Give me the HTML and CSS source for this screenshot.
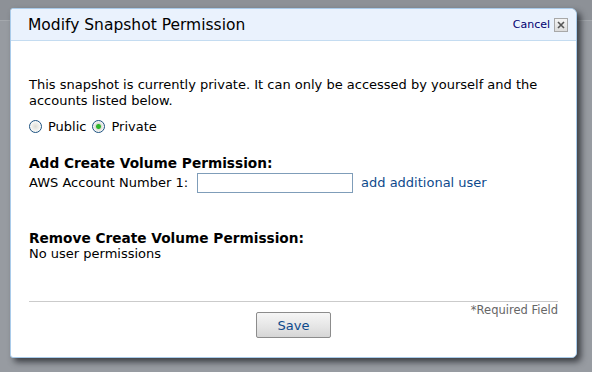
FILE: index.html
```html
<!DOCTYPE html>
<html lang="en">
<head>
  <link rel="stylesheet" href="styles.css">
</head>
<body>

<div class="backdrop-line"></div>

<div id="dialog" class="dialog">
  <div class="dialogHead">
    <span class="dialogTitle">Modify Snapshot Permission</span>
    <a class="cancel" href="#">Cancel</a>
    <span class="closeBox">
      <svg width="8" height="8" viewBox="0 0 8 8"><path d="M1 1L7 7M7 1L1 7" stroke="#555" stroke-width="1.6"/></svg>
    </span>
  </div>

  <div class="dialogBody">
    <p class="intro">This snapshot is currently private. It can only be accessed by yourself and the accounts listed below.</p>

    <div class="radios">
      <span class="radio"></span><span class="radioLabel">Public</span>
      <span class="radio checked"></span><span class="radioLabel">Private</span>
    </div>

    <h3 class="section">Add Create Volume Permission:</h3>
    <div class="accountRow">
      <span>AWS Account Number 1:</span>
      <span class="field"></span>
      <a class="addLink" href="#">add additional user</a>
    </div>

    <h3 class="section remove">Remove Create Volume Permission:</h3>
    <div class="none">No user permissions</div>

    <div class="footer">
      <div class="required">*Required Field</div>
      <div class="saveWrap"><span class="save">Save</span></div>
    </div>
  </div>
</div>

</body>
</html>
```
FILE: styles.css
```css
body {
  margin: 0;
  height: 372px;
  overflow: hidden;
  background: #979ba1;
  font-family: "DejaVu Sans", Verdana, sans-serif;
  font-size: 13px;
  color: #000;
}

.backdrop-line {
  height: 20px;
  background: #8d9197;
  border-bottom: 1px solid #a4a8ad;
}

.dialog {
  position: absolute;
  top: 8px;
  left: 10px;
  width: 565px;
  height: 348px;
  background: #fff;
  border: 1px solid #a9cbea;
  border-radius: 3px 6px 5px 3px;
  box-shadow: 4px 4px 6px rgba(30, 32, 38, 0.75);
}

.dialogHead {
  display: flex;
  align-items: center;
  height: 31px;
  padding: 0 8px 0 17px;
  background: #eaf2fd;
  border-bottom: 1px solid #c4dcf1;
  border-radius: 3px 6px 0 0;
}

.dialogTitle {
  flex: 1;
  font-size: 15.5px;
  padding-top: 1px;
}

.cancel {
  font-size: 11px;
  color: #000070;
  text-decoration: none;
  margin-right: 4px;
}

.closeBox {
  display: flex;
  align-items: center;
  justify-content: center;
  width: 12px;
  height: 12px;
  background: linear-gradient(#f4f4f4, #dcdcdc);
  border: 1px solid #a8a8a8;
}

.dialogBody {
  padding: 0 18px 0 18px;
}

.intro {
  margin: 36px 0 0 0;
  line-height: 16px;
}

.radios {
  display: flex;
  align-items: center;
  margin-top: 9px;
  height: 16px;
}

.radio {
  box-sizing: border-box;
  width: 13px;
  height: 13px;
  border: 1px solid #1c5180;
  border-radius: 50%;
  background: radial-gradient(#dcdcd6, #fbfbf9 70%);
  margin-right: 6px;
}

.radio.checked {
  background: radial-gradient(#2fb62b 0 2px, #dcdcd6 3px, #fbfbf9 70%);
}

.radioLabel {
  margin-right: 6px;
}

.section {
  margin: 21px 0 0 0;
  font-size: 13.7px;
  font-weight: bold;
  line-height: 16px;
}

.accountRow {
  display: flex;
  align-items: center;
  height: 21px;
  margin-top: 1px;
}

.field {
  box-sizing: border-box;
  width: 156px;
  height: 20px;
  border: 1px solid #7f9db9;
  margin-left: 9px;
  margin-right: 8px;
}

.addLink {
  color: #0e4a8c;
  text-decoration: none;
}

.section.remove {
  margin-top: 37px;
}

.none {
  line-height: 16px;
}

.footer {
  margin-top: 39px;
  border-top: 1px solid #cbcbcb;
}

.required {
  text-align: right;
  font-size: 11.5px;
  color: #666;
  margin-top: 1px;
  line-height: 14px;
}

.saveWrap {
  display: flex;
  justify-content: center;
  margin-top: -5px;
}

.save {
  display: flex;
  align-items: center;
  justify-content: center;
  box-sizing: border-box;
  width: 75px;
  height: 26px;
  border: 1px solid #8c8c8c;
  border-radius: 2px;
  background: linear-gradient(#f6f6f6, #e4e4e4 60%, #d6d6d6);
  color: #0e4a8c;
  font-size: 13px;
}
```
